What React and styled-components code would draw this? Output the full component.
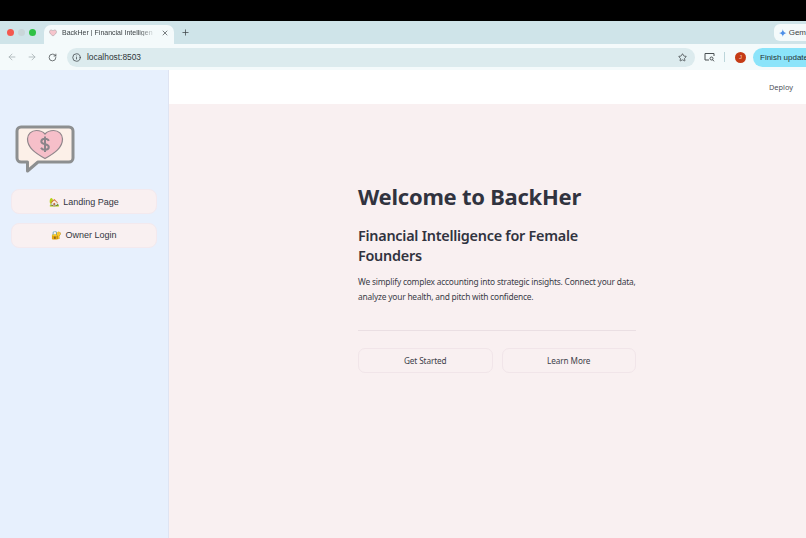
import { createGlobalStyle, styled } from "styled-components";
import { ArrowLeft, ArrowRight, RotateCw, Info, Star, Plus, X } from "lucide-react";

const Global = createGlobalStyle`
  html, body { margin: 0; padding: 0; height: 100%; background: #000; overflow: hidden; }
  #root { height: 100%; }
  * { box-sizing: border-box; }
`;

const Page = styled.div`
  width: 806px;
  height: 538px;
  display: flex;
  flex-direction: column;
  overflow: hidden;
  font-family: "Liberation Sans", Arial, sans-serif;
  filter: blur(0.3px);
`;

const BlackBar = styled.div`
  height: 21px;
  flex: none;
  background: #000;
`;

const TabStrip = styled.div`
  height: 23px;
  flex: none;
  background: #cfe4e9;
  display: flex;
  align-items: flex-end;
  padding-left: 7px;
`;

const Lights = styled.div`
  display: flex;
  gap: 4px;
  align-self: center;
  margin-right: 8px;
`;

const Light = styled.span`
  width: 7px;
  height: 7px;
  border-radius: 50%;
  background: ${(p) => p.color};
`;

const Tab = styled.div`
  width: 130px;
  height: 19px;
  background: #f4fafb;
  border-radius: 7px 7px 0 0;
  display: flex;
  align-items: center;
  padding: 0 5px 4px 5px;
  font-size: 7px;
  color: #3c4245;
`;

const TabTitle = styled.span`
  flex: 1;
  margin-left: 5px;
  margin-right: 5px;
  white-space: nowrap;
  mask-image: linear-gradient(to right, #000 82%, transparent 100%);
`;

const NewTab = styled.div`
  align-self: center;
  margin-left: 7px;
  display: flex;
  color: #3f4648;
`;

const GeminiChip = styled.div`
  margin-left: auto;
  align-self: center;
  width: 32px;
  height: 17px;
  background: #f4fafb;
  border-radius: 6px 0 0 6px;
  display: flex;
  align-items: center;
  gap: 2px;
  padding-left: 5px;
  font-size: 8px;
  color: #3c4245;
  white-space: nowrap;
  overflow: hidden;
`;

const Toolbar = styled.div`
  height: 26px;
  flex: none;
  background: #f4fafb;
  display: flex;
  align-items: center;
  padding: 0 0 0 2px;
  color: #5f6669;
`;

const NavIcon = styled.span`
  width: 20px;
  flex: none;
  display: flex;
  justify-content: center;
  color: ${(p) => (p.$dim ? "#a9b3b6" : "#454b4e")};
`;

const Omnibox = styled.div`
  width: 628px;
  height: 19px;
  flex: none;
  margin-left: 5px;
  background: #dcebee;
  border-radius: 10px;
  display: flex;
  align-items: center;
  padding: 0 8px 0 5px;
  font-size: 8.4px;
  color: #2f3538;
`;

const InfoDot = styled.span`
  display: flex;
  margin-right: 6px;
  color: #3c4245;
`;

const Url = styled.span`
  flex: 1;
`;

const ToolIcon = styled.span`
  display: flex;
  flex: none;
  margin-left: 9px;
  color: #4a5053;
`;

const Divider = styled.span`
  width: 1px;
  height: 10px;
  flex: none;
  margin-left: 9px;
  background: #bcd5da;
`;

const Avatar = styled.span`
  width: 11px;
  height: 11px;
  flex: none;
  margin-left: 10px;
  border-radius: 50%;
  background: #c53b16;
  color: #f3c9b8;
  font-size: 6px;
  display: flex;
  align-items: center;
  justify-content: center;
`;

const UpdateButton = styled.div`
  width: 60px;
  height: 19px;
  margin-left: 7px;
  background: #8be4fa;
  border-radius: 10px 0 0 10px;
  display: flex;
  align-items: center;
  padding-left: 7px;
  font-size: 8px;
  color: #243034;
  white-space: nowrap;
  flex: none;
`;

const AppArea = styled.div`
  flex: 1;
  display: flex;
  min-height: 0;
`;

const Sidebar = styled.aside`
  width: 169px;
  flex: none;
  background: #e7f0fd;
  border-right: 1px solid #dfe4f2;
  padding: 55px 11px 0 11px;
  display: flex;
  flex-direction: column;
`;

const Logo = styled.div`
  display: flex;
  padding-left: 4px;
  margin-bottom: 14px;
`;

const SideButton = styled.button`
  height: 25px;
  margin-bottom: 8.5px;
  border: 1px solid #f3e9ee;
  border-radius: 8px;
  background: #f9f0f1;
  font: 9px "Liberation Sans", Arial, sans-serif;
  color: #33363f;
  display: flex;
  align-items: center;
  justify-content: center;
  gap: 3px;
  padding: 0;
`;

const Glyph = styled.span`
  font-size: 8.5px;
`;

const Content = styled.div`
  flex: 1;
  display: flex;
  flex-direction: column;
  min-width: 0;
`;

const Header = styled.header`
  height: 34px;
  flex: none;
  background: #fff;
  display: flex;
  align-items: center;
  justify-content: flex-end;
  padding-right: 13px;
  font: 7.4px "Noto Sans", sans-serif;
  color: #50535c;
`;

const Main = styled.main`
  flex: 1;
  background: #f9f0f1;
  padding: 76px 0 0 189px;
  font-family: "Noto Sans", sans-serif;
  color: #31333f;
`;

const Column = styled.div`
  width: 278px;
`;

const Title = styled.h1`
  margin: 0 0 14px;
  font-size: 22px;
  line-height: 32px;
  font-weight: 700;
  letter-spacing: -0.25px;
  white-space: nowrap;
`;

const Subtitle = styled.h2`
  margin: 0 0 9px;
  font-size: 14.4px;
  line-height: 19.5px;
  font-weight: 600;
  letter-spacing: -0.25px;
`;

const Lead = styled.p`
  margin: 0;
  font-size: 8.4px;
  line-height: 15px;
  letter-spacing: -0.2px;
  color: #3b3d48;
`;

const Rule = styled.hr`
  margin: 26px 0 17px;
  border: 0;
  border-top: 1px solid #eadfe3;
`;

const Actions = styled.div`
  display: grid;
  grid-template-columns: 1fr 1fr;
  gap: 9px;
`;

const ActionButton = styled.button`
  height: 25px;
  border: 1px solid #f1e5e9;
  border-radius: 7px;
  background: #f9f0f1;
  font: 8.2px "Noto Sans", sans-serif;
  letter-spacing: -0.1px;
  color: #3d3f4a;
  padding: 0;
`;

function HeartLogo() {
  return (
    <svg width="60" height="50" viewBox="0 0 60 50">
      <path d="M6 2H54a4 4 0 0 1 4 4V33a4 4 0 0 1-4 4H23L12.500 46V37H6a4 4 0 0 1-4-4V6a4 4 0 0 1 4-4Z" fill="#fcf0e8" stroke="#8d8f90" strokeWidth="3" strokeLinejoin="round" />
      <path d="M30 33.500C20 28 12.500 22.500 12.500 14C12.500 9 16.500 5.500 21.500 5.500C25 5.500 28 6.800 30 9C32 6.800 35 5.500 38.500 5.500C43.500 5.500 47.500 9 47.500 14C47.500 22.500 40 28 30 33.500Z" fill="#f6bfc9" stroke="#8f868b" strokeWidth="1.2" />
      <path d="M33.800 15.800C33.200 14.500 31.800 13.800 30 13.800C27.800 13.800 26.300 14.900 26.300 16.600C26.300 20.300 33.800 18.300 33.800 22C33.800 23.700 32.200 24.800 30 24.800C28.100 24.800 26.700 24 26 22.700M30 11.500V27" fill="none" stroke="#8a858a" strokeWidth="2" />
    </svg>
  );
}

function GeminiStar() {
  return (
    <svg width="8" height="8" viewBox="0 0 8 8">
      <path d="M4 0C4.300 2.300 5.700 3.700 8 4C5.700 4.300 4.300 5.700 4 8C3.700 5.700 2.300 4.300 0 4C2.300 3.700 3.700 2.300 4 0Z" fill="#4d8fe8" />
    </svg>
  );
}

function PanelIcon() {
  return (
    <svg width="11" height="10" viewBox="0 0 11 10" fill="none" stroke="currentColor" strokeWidth="1">
      <path d="M5 8H1V1.500H10V4" />
      <circle cx="7.500" cy="6.500" r="1.500" />
      <path d="M8.500 7.700L10 9.300" />
    </svg>
  );
}

export default function App() {
  return (
    <Page>
      <Global />
      <BlackBar />
      <TabStrip>
        <Lights>
          <Light color="#f4584f" />
          <Light color="#c9d6d9" />
          <Light color="#2fc145" />
        </Lights>
        <Tab>
          <svg width="8" height="8" viewBox="0 0 8 8">
            <path d="M4 7C2 5.500 .5 4.300 .5 2.700C.5 1.500 1.500 1 2.300 1C3 1 3.600 1.400 4 2C4.400 1.400 5 1 5.700 1C6.500 1 7.500 1.500 7.500 2.700C7.500 4.300 6 5.500 4 7Z" fill="#f6c5cd" stroke="#a9a2a6" strokeWidth=".6" />
          </svg>
          <TabTitle>BackHer | Financial Intelligen</TabTitle>
          <X size={8} color="#3c4245" strokeWidth={2} />
        </Tab>
        <NewTab>
          <Plus size={9} strokeWidth={2} />
        </NewTab>
        <GeminiChip>
          <GeminiStar />
          Gem
        </GeminiChip>
      </TabStrip>
      <Toolbar>
        <NavIcon $dim>
          <ArrowLeft size={10} />
        </NavIcon>
        <NavIcon $dim>
          <ArrowRight size={10} />
        </NavIcon>
        <NavIcon>
          <RotateCw size={9} />
        </NavIcon>
        <Omnibox>
          <InfoDot>
            <Info size={9} />
          </InfoDot>
          <Url>localhost:8503</Url>
          <Star size={9} color="#3c4245" />
        </Omnibox>
        <ToolIcon>
          <PanelIcon />
        </ToolIcon>
        <Divider />
        <Avatar>J</Avatar>
        <UpdateButton>Finish update</UpdateButton>
      </Toolbar>
      <AppArea>
        <Sidebar>
          <Logo>
            <HeartLogo />
          </Logo>
          <SideButton><Glyph>🏡</Glyph> Landing Page</SideButton>
          <SideButton><Glyph>🔐</Glyph> Owner Login</SideButton>
        </Sidebar>
        <Content>
          <Header>Deploy</Header>
          <Main>
            <Column>
              <Title>Welcome to BackHer</Title>
              <Subtitle>Financial Intelligence for Female Founders</Subtitle>
              <Lead>We simplify complex accounting into strategic insights. Connect your data, analyze your health, and pitch with confidence.</Lead>
              <Rule />
              <Actions>
                <ActionButton>Get Started</ActionButton>
                <ActionButton>Learn More</ActionButton>
              </Actions>
            </Column>
          </Main>
        </Content>
      </AppArea>
    </Page>
  );
}
